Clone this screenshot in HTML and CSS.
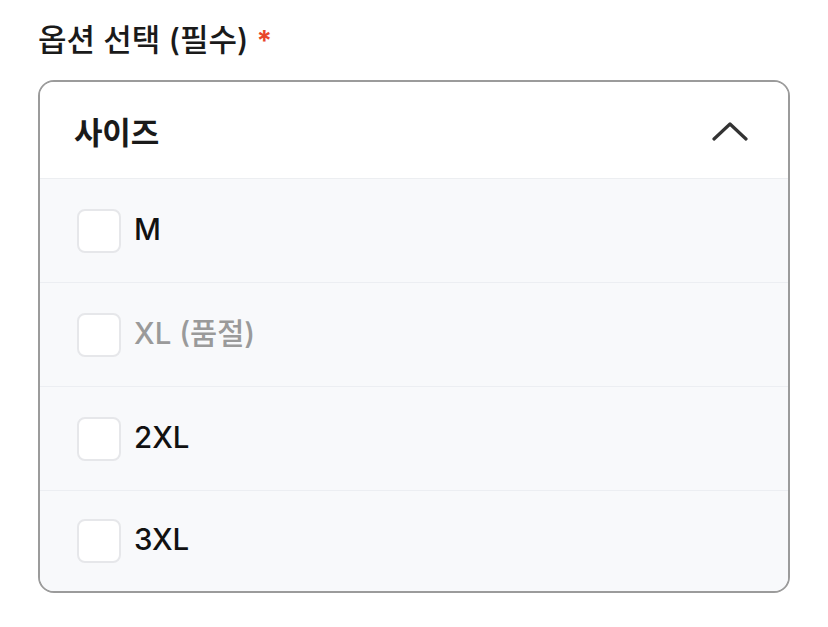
FILE: index.html
```html
<!DOCTYPE html>
<html lang="ko">
<head>
<meta charset="utf-8">
<link rel="stylesheet" href="styles.css">
</head>
<body>
<div class="page">
  <div class="label">옵션 선택 (필수) <span class="req">*</span></div>
  <div class="select">
    <div class="header">
      <span class="title">사이즈</span>
      <svg class="chev" width="36" height="22" viewBox="0 0 36 22"><path d="M2 19 L18 4 L34 19" fill="none" stroke="#333" stroke-width="3.2" stroke-linecap="round" stroke-linejoin="round"/></svg>
    </div>
    <div class="row"><span class="box"></span><span class="txt">M</span></div>
    <div class="row disabled"><span class="box"></span><span class="txt">XL (품절)</span></div>
    <div class="row"><span class="box"></span><span class="txt">2XL</span></div>
    <div class="row last"><span class="box"></span><span class="txt">3XL</span></div>
  </div>
</div>
</body>
</html>
```
FILE: styles.css
```css
* { box-sizing: border-box; }
body { margin: 0; background: #fff; font-family: Inter, "Noto Sans CJK KR", sans-serif; color: #111; }
.page { padding: 18px 38px 0 38px; width: 828px; }
.label { font-size: 31px; font-weight: 500; line-height: 44px; height: 44px; color: #1a1a1a; display: flex; align-items: center; gap: 8px; }
.req { color: #e8452c; font-size: 28px; font-weight: 700; position: relative; top: 1px; }
.select { margin-top: 18px; width: 752px; border: 2px solid #9b9b9b; border-radius: 16px; overflow: hidden; }
.header { height: 97px; display: flex; align-items: center; justify-content: space-between; padding: 0 40px 0 34px; border-bottom: 1px solid #eceef1; background: #fff; }
.title { font-size: 31px; font-weight: 700; color: #1a1a1a; letter-spacing: -0.2px; }
.chev { display: block; margin-top: 2px; }
.row { height: 104px; display: flex; align-items: center; padding-left: 37px; background: #f8f9fb; border-bottom: 1px solid #eceef2; }
.row.last { border-bottom: none; height: 100px; }
.box { width: 44px; height: 44px; border: 2px solid #e6e7ea; border-radius: 8px; background: #fff; margin-right: 13px; flex-shrink: 0; }
.txt { font-size: 29.5px; font-weight: 500; color: #111; line-height: 1; margin-top: -2px; }
.disabled .txt { color: #9a9a9a; }
```
